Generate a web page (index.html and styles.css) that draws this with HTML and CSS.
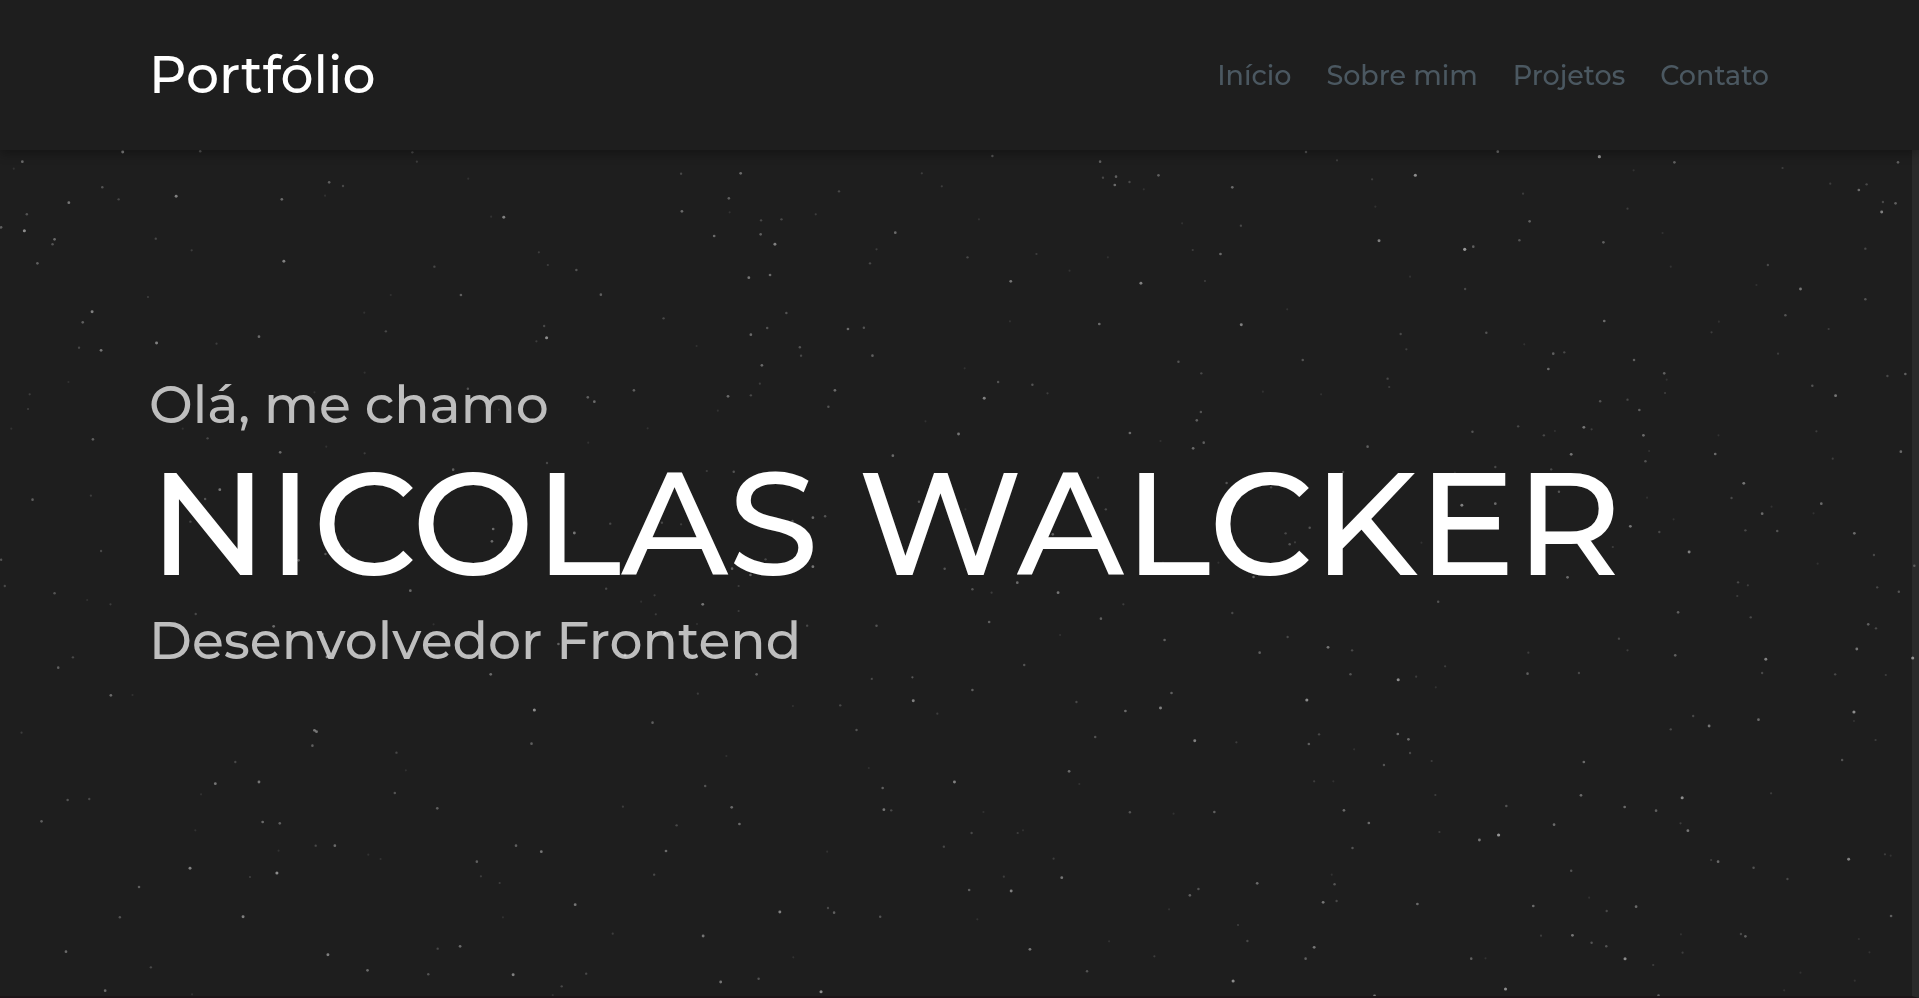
FILE: index.html
```html
<!DOCTYPE html>
<html lang="pt-BR">
<head>
<meta charset="utf-8">
<title>Portfólio</title>
<link rel="stylesheet" href="styles.css">
</head>
<body>
<header class="header">
  <a class="logo" href="#inicio">Portfólio</a>
  <nav class="nav">
    <a href="#inicio">Início</a>
    <a href="#sobre">Sobre mim</a>
    <a href="#projetos">Projetos</a>
    <a href="#contato">Contato</a>
  </nav>
</header>
<main class="hero" id="inicio">
  <p class="hero-line">Olá, me chamo</p>
  <h1 class="hero-name">NICOLAS WALCKER</h1>
  <p class="hero-line">Desenvolvedor Frontend</p>
  <canvas class="stars" id="stars"></canvas>
</main>
<script src="stars.js"></script>
</body>
</html>
```

FILE: styles.css
```css
* {
  box-sizing: border-box;
  margin: 0;
  padding: 0;
}

body {
  display: flex;
  flex-direction: column;
  min-height: 100vh;
  background: #1e1e1e;
  color: #fff;
  font-family: Montserrat, Inter, sans-serif;
  font-weight: 500;
}

.header {
  position: relative;
  z-index: 1;
  display: flex;
  align-items: center;
  justify-content: space-between;
  height: 150px;
  padding: 0 150px 0 149px;
  background: #1e1e1e;
  box-shadow: 0 4px 10px rgba(0, 0, 0, 0.3);
}

.logo {
  color: #fff;
  font-size: 52px;
  line-height: 60px;
  text-decoration: none;
}

.nav {
  display: flex;
  gap: 35px;
}

.nav a {
  color: #4b5861;
  font-size: 27px;
  text-decoration: none;
}

.hero {
  position: relative;
  flex: 1;
  padding: 225px 143px 0 149px;
  border-right: 7px solid #2a2a2a;
  border-bottom: 2px solid #1c1518;
}

.hero-line {
  color: #bebebe;
  font-size: 52px;
  line-height: 60px;
}

.hero-name {
  font-size: 146px;
  font-weight: 500;
  line-height: 176px;
  white-space: nowrap;
}

.stars {
  position: absolute;
  top: 0;
  left: 0;
  width: calc(100% + 7px);
  height: 100%;
  pointer-events: none;
}
```

FILE: stars.js
```js
// Star chart split in sectors; each star is "x,y,brightness" in chart units.
const UNIT_X = 2.451;
const UNIT_Y = 3;
const sectors = [
  { x: 0, y: 0, stars: "300,456,8 490,454,4 54,485,6 33,506,1 250,562,4 290,598,3 168,608,7 431,589,8 690,598,6 806,547,5 840,558,3 796,587,1 1010,457,3 1021,485,2 1147,536,1 65,643,4 2,682,5 59,692,9 133,718,6 128,733,4 91,790,5 381,716,3 469,751,2 695,784,8 1064,800,3 1234,652,8 1320,757,2 1342,795,2 1412,810,4 1129,885,5 1472,884,5 957,885,1 362,891,2 225,935,8 202,967,5 945,994,3 634,1010,6 1333,978,3 1339,1013,9 1203,650,1 892,938,1" },
  { x: 640, y: 0, stars: "100,521,3 246,520,6 217,595,5 487,574,3 102,634,6 219,637,1 430,643,2 296,661,3 346,658,3 181,708,6 295,703,5 330,733,8 625,698,6 579,748,2 563,790,3 266,833,7 318,825,6 57,955,3 358,939,4 311,984,4 271,1004,6 509,987,6 548,983,4 690,520,2 739,559,2 863,468,4 830,658,1 802,772,3 971,762,2 908,844,7 1052,812,1 1146,772,1 1127,485,5 1134,533,3 1166,530,5 1163,555,6 1199,546,3 1234,568,1 1270,526,5 1451,562,6 1328,670,1 1472,677,3 1354,750,2 1422,762,6 1384,843,2 1227,850,8 1125,972,6 906,964,1 1473,974,8" },
  { x: 1280, y: 0, stars: "63,456,4 139,481,2 225,538,2 331,526,9 533,455,6 782,470,10 966,487,5 1231,504,2 1514,487,5 595,581,2 851,626,2 611,664,5 866,511,1 1348,551,2 1437,553,3 1418,570,6 1477,606,3 1508,610,5 1474,636,8 233,620,1 242,722,8 452,748,10 473,740,5 586,721,4 792,727,5 937,699,1 957,800,1 1195,795,3 1434,746,3 453,867,3 1167,855,1 1275,867,7 1434,898,4 1238,946,4 794,963,6 505,998,4 295,1002,3 1057,997,2 1344,987,2 1075,965,1 318,830,1 17,928,1" },
  { x: 0, y: 340, stars: "383,9,8 247,31,7 193,23,3 530,11,2 1314,4,2 167,126,1 72,163,2 68,207,2 27,266,1 227,298,5 508,295,3 686,337,6 799,320,1 893,340,2 893,98,1 770,157,1 1146,146,4 1440,172,5 1456,185,6 1553,151,5 1441,308,1 1340,369,3 1110,389,5 1222,209,1 447,266,1 79,479,5 222,467,2 538,449,7 502,477,4 466,545,3 247,633,3 2,659,4 11,738,3 133,760,4 213,780,1 270,793,2 479,822,3 731,661,5 797,642,4 853,632,2 1208,567,6 1205,604,6 1407,579,7 1495,551,3 1005,752,6 1485,746,3 670,859,6 791,882,4 801,950,9 1062,853,1 178,952,3 142,983,5 1202,1003,6 1531,945,8 1368,912,5" },
  { x: 640, y: 340, stars: "391,22,4 394,47,3 298,76,6 569,47,5 138,18,1 293,131,2 215,169,6 271,166,3 477,151,6 461,200,4 190,212,1 18,265,1 699,244,1 619,347,6 780,282,7 843,175,8 877,126,4 961,134,4 998,160,2 1319,65,4 1375,100,3 1526,155,1 1374,216,4 1364,241,5 1381,308,5 1355,325,6 1200,279,6 1275,303,1 795,85,1 163,393,2 229,395,4 1122,413,2 1437,429,4 1546,442,3 683,485,4 797,508,1 1141,508,3 53,548,3 100,553,2 423,533,6 453,529,4 373,543,4 1011,583,5 307,658,3 225,686,5 270,705,5 423,680,7 746,686,4 241,738,2 35,766,2 2,785,1 153,793,7 241,813,2 38,823,2 409,857,3 579,857,4 286,883,3 139,852,1 814,748,4 861,758,2 924,728,6 1024,758,7 1184,793,2 855,846,5 1129,836,5 1417,668,1 1503,711,5 1451,819,3 1285,900,5 1518,938,5 941,975,4 285,1003,5 667,1012,2 568,1016,1 1029,885,1 60,880,8 1281,668,1" },
  { x: 1280, y: 340, stars: "598,13,1 309,28,2 55,60,4 263,116,3 267,141,2 100,163,1 669,41,5 696,37,3 657,87,6 867,60,5 941,100,5 947,119,1 943,159,2 851,179,3 784,184,4 880,210,5 1220,41,2 1304,137,4 1361,167,7 1488,108,3 1532,102,5 471,275,4 583,259,3 744,262,7 763,268,2 646,286,3 673,273,1 890,286,6 1074,286,1 1314,274,2 214,320,5 713,343,7 904,333,1 895,364,4 1066,342,6 1354,356,2 1521,335,6 154,396,3 428,398,1 527,381,3 664,388,3 683,455,4 445,496,8 527,491,6 1136,430,7 1106,474,3 899,473,1 1204,500,1 1181,521,6 1326,491,6 858,559,7 964,538,1 929,576,3 1140,571,3 1218,573,4 1407,580,6 72,563,4 13,580,3 23,613,4 36,607,2 346,608,1 815,621,2 1002,636,8 1307,520,1 1455,645,3 1317,671,1 1554,677,4 704,712,6 1122,727,3 1146,736,2 1120,768,2 1463,742,3 1516,755,4 387,785,4 975,817,5 1153,832,3 1441,853,5 1460,865,3 18,891,3 830,896,3 117,922,7 176,931,3 608,938,2 851,931,2 968,946,5 1190,958,8 1413,927,7 1550,954,9" },
  { x: 0, y: 660, stars: "271,106,6 324,105,1 1309,150,9 52,218,2 770,211,7 775,215,7 765,257,5 1302,251,5 971,278,3 576,306,3 994,331,1 527,371,7 634,366,7 492,403,1 165,420,4 218,417,3 967,399,4 1071,445,5 1526,440,2 101,484,5 643,486,6 685,490,5 478,511,1 773,557,3 820,557,6 682,572,1 902,584,1 932,597,1 1264,557,5 1326,575,7 465,625,8 1168,605,5 678,639,9 612,651,2 1178,649,2 1224,669,2 340,681,5 1409,734,7 293,772,4 595,770,8 1232,772,1 1501,821,2 161,875,6 1127,859,6 1072,866,3 803,884,8 369,922,3 900,931,6 1049,943,4 1257,944,8 1436,941,3 1376,979,3 257,992,6 470,1003,1 1354,1005,1" },
  { x: 640, y: 660, stars: "567,57,2 667,52,2 141,101,2 374,138,1 490,136,3 669,122,8 814,90,5 728,161,2 30,188,5 530,210,4 1069,126,3 1189,153,6 1275,144,8 1302,99,5 1115,231,4 1359,242,8 1461,247,2 211,288,1 560,324,1 1051,334,6 159,378,4 594,384,5 770,366,8 224,442,6 597,449,7 615,451,3 89,496,3 243,492,6 1200,457,4 1307,461,1 1407,456,5 1076,372,1 841,456,1 812,519,3 925,519,2 938,511,1 744,560,3 63,573,6 458,575,1 1013,596,2 34,644,3 891,650,2 1033,653,7 806,690,5 909,693,8 342,756,8 460,744,3 475,758,5 588,770,4 826,778,1 1368,687,4 1347,706,5 1296,748,1 1512,670,6 1465,795,2 1488,843,3 154,828,7 375,892,1 955,868,7 1149,844,1 1260,889,2 1095,934,4 290,956,4 197,966,7 443,995,9 1453,963,9" },
  { x: 1280, y: 660, stars: "404,19,2 172,43,4 289,59,9 333,50,2 381,82,1 606,41,5 732,39,3 1181,39,3 1360,43,3 1484,45,2 65,120,9 1406,156,9 1406,183,1 1012,168,3 1172,179,6 957,208,3 1051,198,7 1459,240,2 95,223,3 70,252,5 288,222,6 314,238,6 318,279,3 181,268,1 371,303,2 254,315,4 744,306,6 1377,300,4 83,364,2 130,364,1 380,405,2 737,406,6 985,413,9 1203,400,2 554,438,4 844,441,6 921,452,5 156,451,6 217,489,6 390,516,2 488,540,7 535,525,10 671,494,6 981,490,2 999,512,7 177,564,4 1056,600,2 1073,605,6 1160,623,4 1393,598,8 1482,583,2 1496,587,1 713,632,4 1243,657,3 126,644,1 133,673,4 105,727,7 138,723,3 336,732,6 620,738,6 757,713,1 800,753,3 872,740,6 1497,768,5 639,827,2 716,826,7 763,848,4 799,859,4 982,823,1 1129,822,3 1140,829,5 1418,837,1 83,862,7 62,896,5 468,896,5 503,895,1 845,896,9 986,878,2 914,915,2 1444,877,1 1275,938,1 552,987,9 1235,991,1 1408,962,1 231,1008,7 927,1007,5" },
];
const HEADER = 150;
const canvas = document.getElementById("stars");
canvas.width = canvas.clientWidth;
canvas.height = canvas.clientHeight;
const ctx = canvas.getContext("2d");
ctx.fillStyle = "#fff";
for (const sector of sectors) {
  for (const star of sector.stars.split(" ")) {
    const [x, y, level] = star.split(",").map(Number);
    ctx.globalAlpha = 0.04 + level * 0.05;
    ctx.beginPath();
    ctx.arc(sector.x + x / UNIT_X + 0.3, sector.y + y / UNIT_Y - HEADER, 1 + level * 0.06, 0, Math.PI * 2);
    ctx.fill();
  }
}
```
